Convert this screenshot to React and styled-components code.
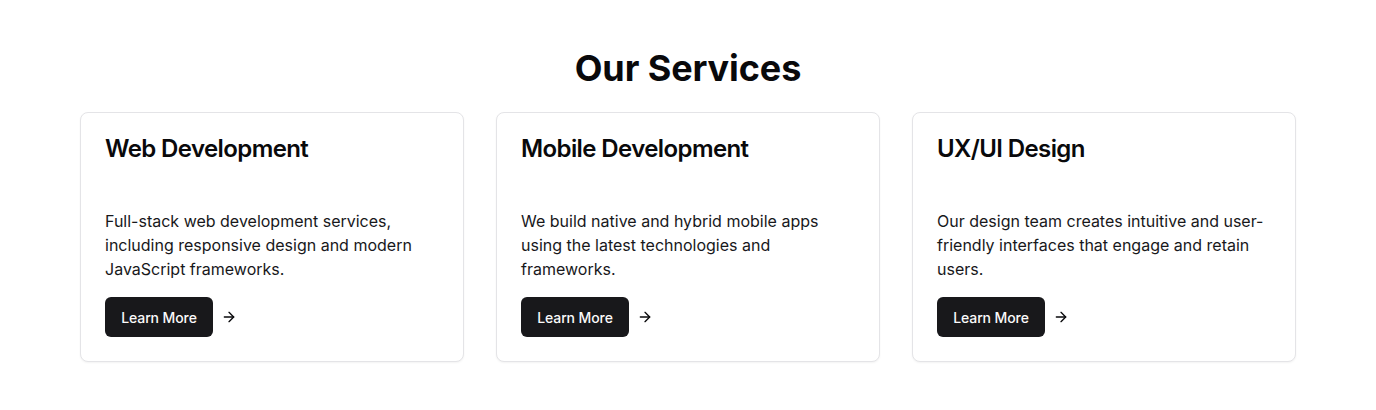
import React from "react";
import styled, { createGlobalStyle } from "styled-components";
import { ArrowRight } from "lucide-react";

const services = [
  {
    title: "Web Development",
    text: "Full-stack web development services, including responsive design and modern JavaScript frameworks.",
  },
  {
    title: "Mobile Development",
    text: "We build native and hybrid mobile apps using the latest technologies and frameworks.",
  },
  {
    title: "UX/UI Design",
    text: "Our design team creates intuitive and user-friendly interfaces that engage and retain users.",
  },
];

const App = () => {
  return (
    <Wrap>
      <GlobalStyle />
      <Heading>Our Services</Heading>
      <Grid>
        {services.map((element, index) => {
          return (
            <Card key={index}>
              <CardTitle>{element.title}</CardTitle>
              <CardText>{element.text}</CardText>
              <Actions>
                <Button type="button">Learn More</Button>
                <ArrowRight size={16} strokeWidth={2} color="#09090b" />
              </Actions>
            </Card>
          );
        })}
      </Grid>
    </Wrap>
  );
};

export default App;

const GlobalStyle = createGlobalStyle`
  body {
    margin: 0;
    background: #ffffff;
    font-family: Inter, "Noto Sans", sans-serif;
    color: #09090b;
  }
`;

const Wrap = styled.section`
  padding: 48px 80px 48px;
`;

const Heading = styled.h2`
  margin: 0 0 24px;
  text-align: center;
  font-size: 36px;
  line-height: 40px;
  font-weight: 700;
  letter-spacing: -0.1px;
`;

const Grid = styled.div`
  display: grid;
  grid-template-columns: repeat(3, 1fr);
  gap: 32px;
`;

const Card = styled.div`
  border: 1px solid #e4e4e7;
  border-radius: 8px;
  background: #ffffff;
  box-shadow: 0 1px 2px rgba(0, 0, 0, 0.05);
  padding: 24px;
  display: flex;
  flex-direction: column;
`;

const CardTitle = styled.h3`
  margin: 0 0 48px;
  font-size: 24px;
  line-height: 24px;
  font-weight: 600;
  letter-spacing: -0.6px;
`;

const CardText = styled.p`
  margin: 0 0 16px;
  font-size: 16px;
  line-height: 24px;
  color: #18181b;
`;

const Actions = styled.div`
  display: flex;
  align-items: center;
  gap: 8px;
`;

const Button = styled.button`
  height: 40px;
  width: 108px;
  padding: 0;
  border: none;
  border-radius: 6px;
  background: #18181b;
  color: #fafafa;
  font-family: Inter, "Noto Sans", sans-serif;
  font-size: 14px;
  font-weight: 500;
  letter-spacing: -0.1px;
  cursor: pointer;
`;
